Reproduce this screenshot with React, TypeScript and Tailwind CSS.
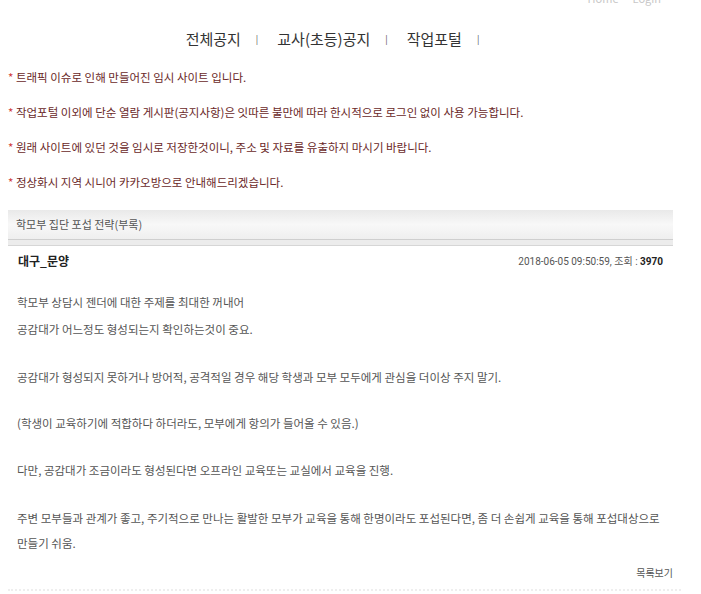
import React from 'react'

const notices = [
  '트래픽 이슈로 인해 만들어진 임시 사이트 입니다.',
  '작업포털 이외에 단순 열람 게시판(공지사항)은 잇따른 불만에 따라 한시적으로 로그인 없이 사용 가능합니다.',
  '원래 사이트에 있던 것을 임시로 저장한것이니, 주소 및 자료를 유출하지 마시기 바랍니다.',
  '정상화시 지역 시니어 카카오방으로 안내해드리겠습니다.',
]

export default function App() {
  return (
    <div
      className="relative w-[701px] h-[594px] overflow-hidden bg-white text-[#333]"
      style={{ fontFamily: '"Noto Sans CJK KR", "Noto Sans", sans-serif' }}
    >
      {/* top links, cut off by the crop */}
      <div className="absolute right-[40px] top-[-10px] flex gap-[14px] text-[11px] text-[#c8c8c8]">
        <span>Home</span>
        <span>Login</span>
      </div>

      <nav className="flex justify-center items-center pt-[28px] pr-[36px] text-[15px] text-[#333]">
        <span>전체공지</span>
        <span className="ml-[15px] mr-[19px] text-[9px] text-[#555]">|</span>
        <span>교사(초등)공지</span>
        <span className="ml-[15px] mr-[19px] text-[9px] text-[#555]">|</span>
        <span>작업포털</span>
        <span className="ml-[15px] text-[9px] text-[#555]">|</span>
      </nav>

      <ul className="mt-[17px] pl-[8px] flex flex-col gap-[17px] text-[11.5px] leading-[18px] text-[#6a2828]">
        {notices.map((n) => (
          <li key={n}>
            <span className="text-[#d03a3a]">*</span> {n}
          </li>
        ))}
      </ul>

      <div className="mt-[19px] mx-[8px] w-[665px]">
        <div className="h-[30px] flex items-center pl-[8px] text-[11px] text-[#555] bg-gradient-to-b from-[#e9e9e9] via-[#f8f8f8] to-[#efefef] border-b border-[#cfcfcf]">
          학모부 집단 포섭 전략(부록)
        </div>
        <div className="h-[6px] bg-[#ececec] border-b border-[#d6d6d6]" />
        <div className="flex justify-between items-center h-[31px] pl-[10px] pr-[10px]">
          <span className="text-[12px] font-bold text-[#222]">대구_문양</span>
          <span className="text-[10px] text-[#555]" style={{ fontFamily: 'Roboto, "Noto Sans CJK KR", sans-serif' }}>
            2018-06-05 09:50:59, 조회 : <b className="text-[#222]">3970</b>
          </span>
        </div>
      </div>

      <div className="mt-[12px] pl-[17px] text-[11.5px] leading-[27px] text-[#555]">
        <p>학모부 상담시 젠더에 대한 주제를 최대한 꺼내어</p>
        <p>공감대가 어느정도 형성되는지 확인하는것이 중요.</p>
        <p className="mt-[21px]">공감대가 형성되지 못하거나 방어적, 공격적일 경우 해당 학생과 모부 모두에게 관심을 더이상 주지 말기.</p>
        <p className="mt-[19px]">(학생이 교육하기에 적합하다 하더라도, 모부에게 항의가 들어올 수 있음.)</p>
        <p className="mt-[20px]">다만, 공감대가 조금이라도 형성된다면 오프라인 교육또는 교실에서 교육을 진행.</p>
        <p className="mt-[21px]">주변 모부들과 관계가 좋고, 주기적으로 만나는 활발한 모부가 교육을 통해 한명이라도 포섭된다면, 좀 더 손쉽게 교육을 통해 포섭대상으로</p>
        <p className="leading-[23px]">만들기 쉬움.</p>
      </div>

      <div className="flex justify-end w-[673px] mt-[10px] text-[10px] text-[#555]">목록보기</div>

      <div className="absolute left-[8px] right-[20px] top-[589px] border-t-2 border-dotted border-[#eeeeee]" />
    </div>
  )
}
